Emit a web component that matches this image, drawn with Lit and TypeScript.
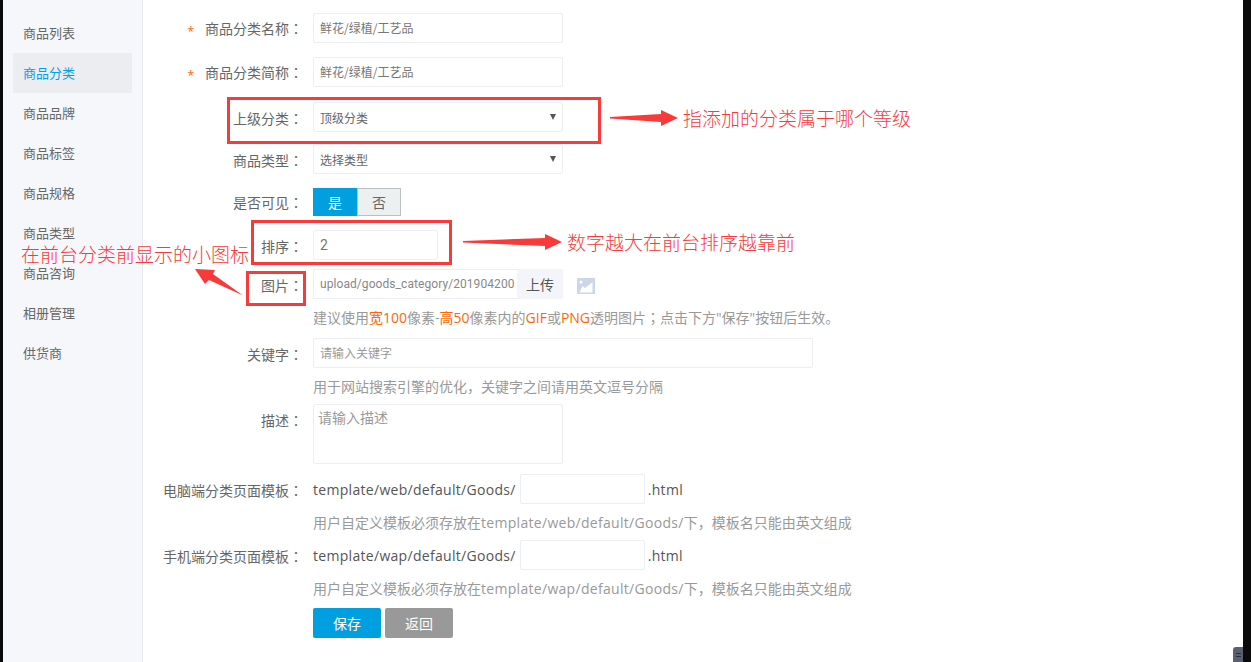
import { LitElement, html, css } from "lit";
import { customElement } from "lit/decorators.js";

const NAV = ["商品列表", "商品分类", "商品品牌", "商品标签", "商品规格", "商品类型", "商品咨询", "相册管理", "供货商"];

@customElement("app-root")
export class AppRoot extends LitElement {
  static styles = css`
    :host { display: block; width: 1251px; height: 662px; position: relative; overflow: hidden; background: #fff;
      font-family: "Open Sans", "Noto Sans CJK SC", sans-serif; font-size: 14px; color: #666; }
    * { box-sizing: border-box; }
    .page { display: flex; height: 662px; }
    .edgeL { width: 3px; background: #0b0b0b; flex: none; }
    .edgeR { width: 8px; background: #0b0b0b; flex: none; }
    .side { width: 140px; flex: none; background: #f5f7fb; border-right: 1px solid #e6e9f0; padding: 13px 10px 0; }
    .nav { height: 40px; width: 119px; display: flex; align-items: center; padding: 0 0 2px 10px; color: #666; font-size: 13px; }
    .nav.on { background: #ecedf1; color: #00a0e9; }
    .main { flex: 1; padding-top: 13px; }
    .row { display: flex; align-items: center; min-height: 30px; }
    .lab { width: 170px; flex: none; text-align: right; padding: 2px 10px 0 0; color: #666; white-space: nowrap; font-size: 14px; }
    .colon { font-family: "Noto Sans CJK TC", sans-serif; line-height: 0; }
    .req { color: #f60; margin-right: 11px; font-size: 12px; vertical-align: -2px; }
    .in { height: 30px; width: 250px; border: 1px solid #eceef2; border-radius: 2px; padding: 0 6px 1px; font: 12px "Noto Sans CJK SC", sans-serif; color: #777; background: #fff; outline: none; display: block; }
    .in::placeholder { color: #999; }
    .wrap { position: relative; width: 250px; }
    select.in { appearance: none; width: 250px; color: #666; padding-bottom: 0; }
    .wrap::after { content: ""; position: absolute; left: 237px; top: 12px; border: 3.5px solid transparent; border-top: 6px solid #555; border-bottom: 0; }
    .m14 { margin-bottom: 14px; } .m15 { margin-bottom: 15px; } .m12 { margin-bottom: 12px; } .m9 { margin-bottom: 9px; } .m10 { margin-bottom: 10px; }
    .short { min-height: 28px; }
    .short .lab { padding-top: 0; }
    .toggle { display: flex; height: 28px; width: 88px; }
    .toggle span { width: 44px; display: flex; align-items: center; justify-content: center; font-size: 14px; }
    .yes { background: #00a0e0; color: #fff; }
    .no { background: #edf0f0; border: 1px solid #bbc0c3; color: #666; }
    .sort { width: 125px; font-size: 14px; font-family: "Roboto", sans-serif; }
    .upload { display: flex; width: 250px; height: 30px; }
    .path { width: 204px; border-right: 0; border-radius: 2px 0 0 2px; padding: 0 0 0 6px; font: 12px "Roboto", sans-serif; letter-spacing: .07px; overflow: hidden; color: #888; }
    .upbtn { width: 46px; background: #f3f5fa; display: flex; align-items: center; justify-content: center; color: #555; font-size: 14px; padding-bottom: 1px; }
    .pic { margin: 4px 0 0 14px; }
    .hint { margin-left: 170px; color: #999; font-size: 14px; line-height: 18px; height: 18px; white-space: nowrap; letter-spacing: 0; }
    .hint b { font-weight: 400; color: #f60; }
    .latin { letter-spacing: .3px; }
    .h1 { margin-top: 10px; margin-bottom: 11px; }
    .h2 { margin-top: 10px; margin-bottom: 8px; }
    .h3 { margin-top: 10px; margin-bottom: 8px; }
    .h4 { margin-top: 10px; margin-bottom: 10px; }
    .kw { width: 500px; }
    textarea.in { height: 60px; padding: 2px 4px; resize: none; font-size: 14px; }
    .top { align-items: flex-start; }
    .top .lab { padding-top: 6px; }
    .tpl { font-size: 14px; color: #555; white-space: nowrap; letter-spacing: .3px; }
    .tplin { width: 125px; margin: 0 3px 0 4px; }
    .btns { display: flex; gap: 4px; margin-left: 170px; }
    .btn { width: 68px; height: 30px; border-radius: 2px; color: #fff; display: flex; align-items: center; justify-content: center; font-size: 14px; }
    .save { background: #00a0e0; }
    .back { background: #999; }
    .over { position: absolute; left: 0; top: 0; pointer-events: none; }
    .note { position: absolute; color: #f93a3a; font: 19px/24px "Noto Sans CJK SC", sans-serif; white-space: nowrap; font-weight: 300; }
    .n1 { left: 683px; top: 106px; }
    .n2 { left: 567px; top: 230px; }
    .n3 { left: 21px; top: 242px; }
    .grip { position: absolute; left: 1233px; top: 647px; width: 10px; height: 15px; background: #5b6070; border-radius: 3px 0 0 0; display: flex; flex-direction: column; gap: 2px; padding: 6px 2px 0 3px; }
    .grip i { height: 1px; background: #2c2f38; display: block; }
  `;

  render() {
    const c = html`<span class="colon">：</span>`;
    return html`
      <div class="page">
        <div class="edgeL"></div>
        <aside class="side">
          ${NAV.map((n, i) => html`<div class="nav ${i === 1 ? "on" : ""}">${n}</div>`)}
        </aside>
        <main class="main">
          <div class="row m14"><div class="lab"><span class="req">*</span>商品分类名称${c}</div><input class="in" value="鲜花/绿植/工艺品" /></div>
          <div class="row m15"><div class="lab"><span class="req">*</span>商品分类简称${c}</div><input class="in" value="鲜花/绿植/工艺品" /></div>
          <div class="row m12"><div class="lab">上级分类${c}</div><div class="wrap"><select class="in"><option>顶级分类</option></select></div></div>
          <div class="row m14"><div class="lab">商品类型${c}</div><div class="wrap"><select class="in"><option>选择类型</option></select></div></div>
          <div class="row m14 short"><div class="lab">是否可见${c}</div><div class="toggle"><span class="yes">是</span><span class="no">否</span></div></div>
          <div class="row m9"><div class="lab">排序${c}</div><input class="in sort" value="2" /></div>
          <div class="row"><div class="lab">图片${c}</div>
            <div class="upload"><input class="in path" value="upload/goods_category/201904200" /><div class="upbtn">上传</div></div>
            <svg class="pic" width="18" height="16" viewBox="0 0 18 16"><rect width="18" height="16" rx="1" fill="#cdd5e8"/><path d="M2.5 14.5 L5.5 8 L8 10 L15.5 4 L15.5 14.5 Z" fill="#fff"/><circle cx="4" cy="4" r="1.6" fill="#fff"/></svg>
          </div>
          <div class="hint h1">建议使用<b>宽100</b>像素-<b>高50</b>像素内的<b>GIF</b>或<b>PNG</b>透明图片<span class="colon">；</span>点击下方"保存"按钮后生效。</div>
          <div class="row"><div class="lab">关键字${c}</div><input class="in kw" placeholder="请输入关键字" /></div>
          <div class="hint h2">用于网站搜索引擎的优化，关键字之间请用英文逗号分隔</div>
          <div class="row top m10"><div class="lab">描述${c}</div><textarea class="in" placeholder="请输入描述"></textarea></div>
          <div class="row"><div class="lab">电脑端分类页面模板${c}</div><span class="tpl">template/web/default/Goods/</span><input class="in tplin" /><span class="tpl">.html</span></div>
          <div class="hint h3">用户自定义模板必须存放在<span class="latin">template/web/default/Goods/</span>下，模板名只能由英文组成</div>
          <div class="row"><div class="lab">手机端分类页面模板${c}</div><span class="tpl">template/wap/default/Goods/</span><input class="in tplin" /><span class="tpl">.html</span></div>
          <div class="hint h4">用户自定义模板必须存放在<span class="latin">template/wap/default/Goods/</span>下，模板名只能由英文组成</div>
          <div class="btns"><div class="btn save">保存</div><div class="btn back">返回</div></div>
        </main>
        <div class="edgeR"></div>
      </div>
      <svg class="over" width="1251" height="662" viewBox="0 0 1251 662">
        <g fill="none" stroke="#f93a3a" stroke-width="3">
          <rect x="228.5" y="98.5" width="371" height="44"/>
          <rect x="252.5" y="221.5" width="198" height="42"/>
          <rect x="247.5" y="272.5" width="57" height="32"/>
        </g>
        <g fill="#f93a3a">
          <path d="M610 117 L661 114 L661 110 L678 118 L661 126 L661 122 L610 118.5 Z"/>
          <path d="M463 241 L545 238 L545 234 L562 242 L545 250 L545 246 L463 242.5 Z"/>
          <path d="M243 295.5 L213 274 L215 270 L195 269 L205 284 L209 280 Z"/>
        </g>
      </svg>
      <div class="note n1">指添加的分类属于哪个等级</div>
      <div class="note n2">数字越大在前台排序越靠前</div>
      <div class="note n3">在前台分类前显示的小图标</div>
      <div class="grip"><i></i><i></i></div>
    `;
  }
}
